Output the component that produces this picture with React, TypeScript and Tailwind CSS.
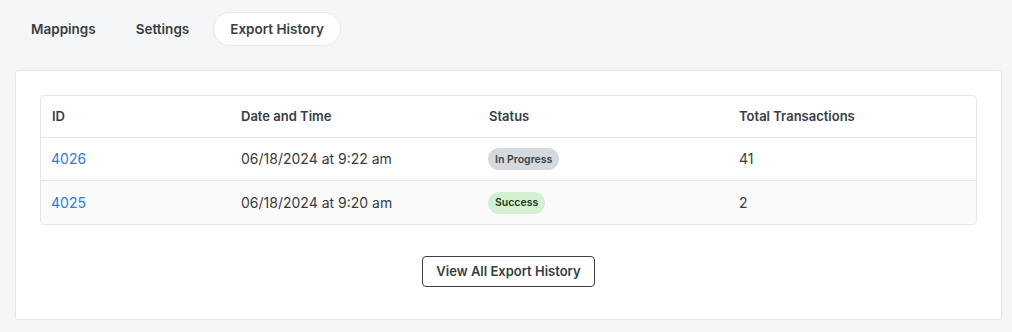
import React from "react";

type Row = {
  id: string;
  date: string;
  status: "In Progress" | "Success";
  total: number;
};

const rows: Row[] = [
  { id: "4026", date: "06/18/2024 at 9:22 am", status: "In Progress", total: 41 },
  { id: "4025", date: "06/18/2024 at 9:20 am", status: "Success", total: 2 },
];

function StatusBadge({ value }: { value: Row["status"] }) {
  const tone = value === "Success" ? "bg-[#d3f0d1] text-[#1f3a1f]" : "bg-[#d5d9de] text-[#3b4047]";
  return (
    <span className={`inline-flex h-[22px] items-center rounded-full px-[7px] text-[10.5px] font-semibold ${tone}`}>{value}</span>
  );
}

export default function App() {
  return (
    <div className="min-h-[332px] bg-[#f5f6f7] pl-[15px] pr-[10px] pt-[12px] pb-[12px] text-[#333] [font-family:Inter,'Noto_Sans',sans-serif]">
      <div className="flex items-center gap-[8px]">
        <button className="h-[34px] rounded-full px-[16px] text-[13.5px] font-semibold text-[#3a3d42]">Mappings</button>
        <button className="h-[34px] rounded-full px-[16px] text-[13.5px] font-semibold text-[#3a3d42]">Settings</button>
        <button className="h-[34px] rounded-full border border-[#e6e8eb] bg-white px-[16px] text-[13.5px] font-semibold text-[#3a3d42]">
          Export History
        </button>
      </div>

      <div className="mt-[24px] rounded-[3px] border border-[#e6e8eb] bg-white px-[24px] pt-[24px] pb-[32px]">
        <div className="overflow-hidden rounded-[5px] border border-[#e3e5e8]">
          <table className="w-full table-fixed text-left text-[14px]">
            <colgroup>
              <col className="w-[188px]" />
              <col className="w-[248px]" />
              <col className="w-[250px]" />
              <col />
            </colgroup>
            <thead>
              <tr className="h-[41px] border-b border-[#e3e5e8] text-[13px] font-semibold text-[#3a3d42]">
                <th className="px-[11px] font-semibold">ID</th>
                <th className="px-[12px] font-semibold">Date and Time</th>
                <th className="px-[12px] font-semibold">Status</th>
                <th className="px-[12px] font-semibold">Total Transactions</th>
              </tr>
            </thead>
            <tbody>
              {rows.map((row, i) => (
                <tr key={row.id} className={i > 0 ? "h-[44px] border-t border-[#e3e5e8] bg-[#fafafa]" : "h-[43px]"}>
                  <td className="px-[10px] text-[#2f7bd8]">{row.id}</td>
                  <td className="px-[12px] text-[#3a3a3a]">{row.date}</td>
                  <td className="px-[11px]"><StatusBadge value={row.status} /></td>
                  <td className="px-[12px] text-[#3a3a3a]">{row.total}</td>
                </tr>
              ))}
            </tbody>
          </table>
        </div>

        <div className="mt-[31px] flex justify-center">
          <button className="h-[31px] w-[173px] rounded-[4px] border border-[#3d4147] bg-white text-[13px] font-semibold text-[#3a3d42]">
            View All Export History
          </button>
        </div>
      </div>
    </div>
  );
}
